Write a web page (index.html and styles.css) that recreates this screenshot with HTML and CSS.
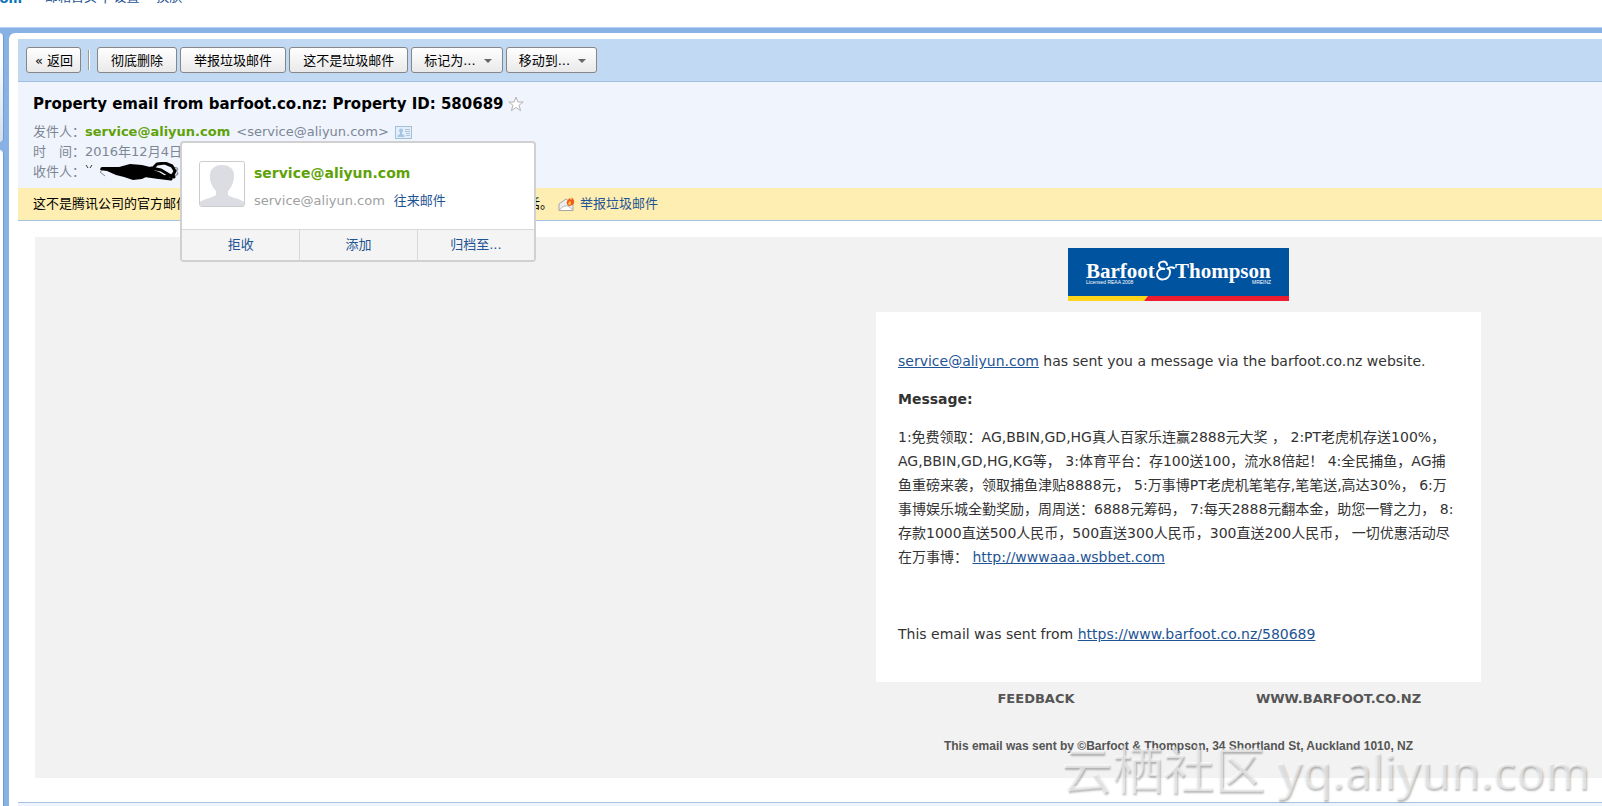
FILE: index.html
```html
<!DOCTYPE html>
<html lang="zh-CN">
<head>
<meta charset="utf-8">
<title>Property email from barfoot.co.nz: Property ID: 580689</title>
<link rel="stylesheet" href="styles.css">
</head>
<body>
<header class="top">
  <span class="brand">.com</span>
  <nav class="topnav"><a href="#">邮箱首页</a><span>|</span><a href="#">设置</a><span>-</span><a href="#">换肤</a></nav>
</header>
<div class="frame">
  <aside class="rail"><div class="tab"></div><div class="side"></div></aside>
  <main class="mail">
    <div class="toolbar">
      <button type="button">«&nbsp;返回</button>
      <span class="sep"></span>
      <button type="button" class="wide">彻底删除</button>
      <button type="button" class="wide">举报垃圾邮件</button>
      <button type="button" class="wide">这不是垃圾邮件</button>
      <button type="button" class="drop">标记为... <span class="caret"></span></button>
      <button type="button" class="drop">移动到... <span class="caret"></span></button>
    </div>
    <section class="info">
      <h1>Property email from barfoot.co.nz: Property ID: 580689
        <svg class="star" viewBox="0 0 16 16"><path d="M8 1 9.900 6h5.300L11 9.300l1.600 5.400L8 11.500l-4.600 3.200L5 9.300.8 6h5.300z"/></svg>
      </h1>
      <div class="row"><span>发件人：</span><b class="green">service@aliyun.com</b><span class="addr">&lt;service@aliyun.com&gt;</span>
        <svg class="vcard" viewBox="0 0 17 13"><rect x=".5" y=".5" width="16" height="12" fill="#e4eef8" stroke="#a3c0da"/><circle cx="6" cy="4.500" r="2" fill="#a4c5e4"/><path d="M2.500 11V9.500L5 8V6h2v2l2.500 1.500V11z" fill="#a4c5e4"/><path d="M10 3.500h5M10 5.500h5M11 7.500h4M11 9.500h4" stroke="#a9c4dc"/></svg>
      </div>
      <div class="row"><span>时　间：</span><span>2016年12月4日</span></div>
      <div class="row"><span>收件人：</span>
        <svg class="scribble" viewBox="0 0 94 20"><path d="m1 3 2 3M7 3 5 6" stroke="#333" fill="none"/><path d="m20 6-5 4 5 4" stroke="#888" fill="none"/><text x="86" y="14" font-size="13" fill="#888">3</text><path d="M16 6 34 5l11-3 12 1 8 2v8l-8 4-9 1-9-3-8-2-9-4-7-1z"/><path d="M17 6.500h40M44 14l18-2 6-6 4-4 8-1 7 3 3 5-2 4-9 2-8-3-8-4 3-2 10 2 10 6 3 1M56 13l14 2 16 2" fill="none" stroke="#000" stroke-width="3" stroke-linecap="round" stroke-linejoin="round"/><path d="m66 7 8 3 10 6-10 1-10-4z"/></svg>
      </div>
    </section>
    <div class="notice">
      <div class="warn"><span>这不是腾讯公司的官方邮件</span><span>，请勿轻信密保、汇款、中奖信息，勿轻易拨打陌生电话。</span></div>
      <svg class="spam" viewBox="0 0 17 15"><path d="M1 7 8 2l7 5v6.500H1z" fill="#eee" stroke="#a5a5a5"/><path d="m1 13 5-4h4l5 4" fill="#fff" stroke="#bbb"/><path d="M11 9C7 7 9 3 12 1c0 1 1 1 1 2 1-1 1-2 0-3 5 3 4 9-2 9z" fill="#f35a18"/><path d="M11 8c-2-2 0-3 1-4 2 2 1 4-1 4z" fill="#ffc23d"/></svg>
      <a href="#">举报垃圾邮件</a>
    </div>
    <article class="body">
      <div class="letter">
        <svg class="logo" viewBox="0 0 221 53" role="img" aria-label="Barfoot &amp; Thompson"><path fill="#00539f" d="M0 0h221v48H0z"/><path fill="#ffd51c" d="M0 48h80l-4 5H0z"/><path fill="#ed1c2e" d="M80 48h141v5H76z"/><g fill="#fff" font-family="Liberation Serif,serif" font-weight="bold" font-size="21"><text x="18" y="30">Barfoot</text><path d="M99 17c0-5-8-4-8 0 0 3 3 4 6 4-5-1-8 2-8 5 0 8 13 7 13-2 0-3-2-4-3-3 1-2 5-2 7-1" fill="none" stroke="#fff" stroke-width="2" stroke-linecap="round"/><text x="107" y="30">Thompson</text></g><g fill="#fff" font-family="Liberation Sans,sans-serif" font-size="5"><text x="18" y="36">Licensed REAA 2008</text><text x="184" y="36">MREINZ</text></g></svg>
        <div class="paper">
          <p><a href="#">service@aliyun.com</a> has sent you a message via the barfoot.co.nz website.</p>
          <p><b>Message:</b></p>
          <p>1:免费领取：AG,BBIN,GD,HG真人百家乐连赢2888元大奖 ， 2:PT老虎机存送100%，<br>AG,BBIN,GD,HG,KG等， 3:体育平台：存100送100，流水8倍起！ 4:全民捕鱼，AG捕<br>鱼重磅来袭，领取捕鱼津贴8888元， 5:万事博PT老虎机笔笔存,笔笔送,高达30%， 6:万<br>事博娱乐城全勤奖励，周周送：6888元筹码， 7:每天2888元翻本金，助您一臂之力， 8:<br>存款1000直送500人民币，500直送300人民币，300直送200人民币， 一切优惠活动尽<br>在万事博： <a href="#">http://wwwaaa.wsbbet.com</a></p>
          <p class="from">This email was sent from <a href="#">https://www.barfoot.co.nz/580689</a></p>
        </div>
        <div class="links"><a href="#">FEEDBACK</a><a href="#">WWW.BARFOOT.CO.NZ</a></div>
        <p class="legal">This email was sent by ©Barfoot &amp; Thompson, 34 Shortland St, Auckland 1010, NZ</p>
      </div>
    </article>
    <div class="foot"></div>
  </main>
</div>
<div class="popup">
  <div class="person">
    <svg class="avatar" viewBox="0 0 46 46"><rect x=".5" y=".5" width="45" height="45" rx="2" fill="#fff" stroke="#ccc"/><path fill="#dcdde3" d="M1 45v-4c5-4 13-4 16-7v-4c-4-4-7-11-6-17C12 7 17 4 23 4s12 3 12 10c0 6-2 12-6 16v4c3 3 11 3 16 7v4z"/></svg>
    <div><b class="green name">service@aliyun.com</b><div class="sub">service@aliyun.com<a href="#">往来邮件</a></div></div>
  </div>
  <div class="acts"><button type="button">拒收</button><button type="button">添加</button><button type="button">归档至...</button></div>
</div>
<div class="mark"><span class="zh">云栖社区</span> yq.aliyun.com</div>
</body>
</html>
```
FILE: styles.css
```css
* { box-sizing: border-box; }
body { margin: 0; height: 100vh; overflow: hidden; position: relative; display: flex; flex-direction: column; background: #fff; color: #000; font: 13px/20px "DejaVu Sans", "Noto Sans CJK SC", sans-serif; }
a { color: #1e5494; text-decoration: none; }
p, h1 { margin: 0; }
button { font: inherit; }
.top { height: 27px; flex: none; display: flex; }
.top > * { margin-top: -13px; }
.top .brand { width: 45px; margin: -11px 0 0 -13px; padding-right: 10px; display: flex; justify-content: flex-end; font-weight: bold; color: #0b74b8; }
.topnav { display: flex; gap: 6px; padding-left: 13px; color: #1e5494; }
.frame { flex: 1; min-height: 0; display: flex; background: #88b2e6; border-top: 1px solid #b7d3f3; padding-top: 5px; }
.rail { width: 9px; flex: none; display: flex; flex-direction: column; gap: 8px; }
.tab, .side { width: 4px; border-radius: 0 5px 0 0; border-right: 1px solid #6f9bd3; }
.tab { height: 109px; border-radius: 0 5px 5px 0; background: linear-gradient(#fff 20%, #d3dfec); }
.side { flex: 1; background: #fff; }
.mail { flex: 1; min-width: 0; background: #fff; border-radius: 6px 0 0; padding: 6px 0 0 9px; display: flex; flex-direction: column; }
.toolbar { display: flex; align-items: center; gap: 3px; height: 43px; flex: none; background: #c1d9f3; border-bottom: 1px solid #9fbfe2; padding-left: 8px; }
.toolbar button { height: 26px; padding: 1px 7px 0 8px; border: 1px solid #868686; border-radius: 3px; background: linear-gradient(#fff, #e9e9e9); color: #000; line-height: 24px; white-space: nowrap; }
.toolbar .wide { padding: 1px 13px 0; }
.toolbar .drop { padding: 1px 10px 0 12px; }
.sep { width: 2px; height: 20px; margin: 0 4px; border-left: 1px solid #999; background: #fff; }
.caret { display: inline-block; border: 4px solid transparent; border-top-color: #666; border-bottom: 0; vertical-align: 2px; margin-left: 4px; }
.info { flex: none; background: #eff4fd; padding: 11px 0 6px 15px; color: #7d8694; }
h1 { font-size: 15px; line-height: 22px; color: #000; margin-bottom: 7px; display: flex; align-items: center; gap: 4px; white-space: nowrap; }
.star { width: 16px; height: 16px; fill: #fff; stroke: #b4b4b4; }
.row { display: flex; align-items: center; height: 20px; }
.green { color: #5fa207; }
.addr { margin-left: 6px; }
.vcard { width: 17px; height: 13px; margin-left: 6px; }
.scribble { width: 94px; height: 20px; }
.notice { flex: none; display: flex; align-items: center; height: 33px; padding-left: 15px; background: #ffeeb1; border-bottom: 1px solid #a6c3e3; }
.warn { width: 520px; white-space: nowrap; display: flex; justify-content: space-between; }
.spam { width: 17px; height: 15px; margin: 0 5px; }
.body { margin: 16px 0 24px 17px; background: #f2f2f2; display: flex; justify-content: flex-end; padding: 11px 121px 22px 0; flex: none; }
.letter { width: 605px; display: flex; flex-direction: column; align-items: center; }
.logo { width: 221px; height: 53px; margin-bottom: 11px; }
.paper { width: 100%; background: #fff; padding: 37px 22px 36px; font-size: 14px; line-height: 24px; color: #333; white-space: nowrap; }
.paper p { margin-bottom: 14px; }
.paper a { text-decoration: underline; }
.paper .from { margin: 53px 0 0; }
.links { display: grid; grid-template-columns: 320px 1fr; width: 100%; text-align: center; line-height: 34px; font-weight: bold; }
.links a { color: #555; }
.legal { font: bold 12px/20px "Liberation Sans", sans-serif; color: #555; margin-top: 20px; }
.foot { flex: 1; border-top: 1px solid #a6c3e3; background: #eff4fc; }
.popup { position: absolute; left: 180px; top: 141px; width: 356px; border: 2px solid #d0d0d0; border-radius: 4px; background: #fff; }
.person { display: flex; gap: 9px; height: 86px; padding: 18px 0 0 17px; }
.avatar { width: 46px; height: 46px; }
.name { font-size: 14px; line-height: 24px; }
.sub { color: #a0a0a0; line-height: 32px; }
.sub a { margin-left: 9px; }
.acts { display: grid; grid-template-columns: repeat(3, 1fr); }
.acts button { height: 31px; padding: 0; background: #f4f4f4; border: 0; border-top: 1px solid #d9d9d9; color: #1e5494; }
.acts button + button { border-left: 1px solid #d9d9d9; }
.mark { position: absolute; right: 12px; bottom: 3px; font: 48px/64px "Noto Sans", "Noto Sans CJK SC", sans-serif; color: #fff8; text-shadow: 1px 2px 2px #0004; white-space: nowrap; }
.zh { font-size: 51px; }
```
